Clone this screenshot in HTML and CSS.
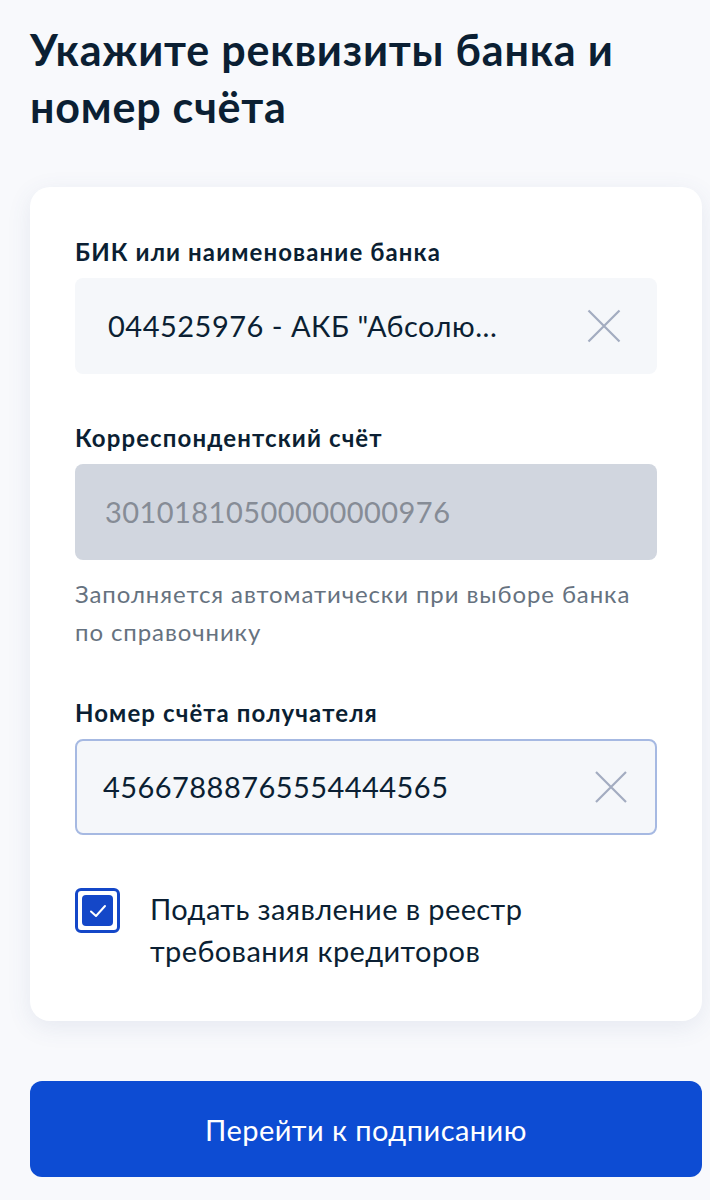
FILE: index.html
```html
<!DOCTYPE html>
<html lang="ru">
<head>
<meta charset="utf-8">
<link rel="stylesheet" href="styles.css">
</head>
<body>
<main class="page">
  <h1 class="title">Укажите реквизиты банка и номер счёта</h1>
  <section class="card">
    <div class="field f1">
      <div class="label">БИК или наименование банка</div>
      <div class="input">
        <span class="value">044525976 - АКБ "Абсолю...</span>
        <svg class="clear" width="34" height="34" viewBox="0 0 34 34"><path d="M1.5 1.5 L32.5 32.5 M32.5 1.5 L1.5 32.5" stroke="#a3acc0" stroke-width="2.2" fill="none"/></svg>
      </div>
    </div>
    <div class="field f2">
      <div class="label">Корреспондентский счёт</div>
      <div class="input disabled">
        <span class="value">30101810500000000976</span>
      </div>
      <div class="hint">Заполняется автоматически при выборе банка по справочнику</div>
    </div>
    <div class="field f3">
      <div class="label">Номер счёта получателя</div>
      <div class="input focused">
        <span class="value">45667888765554444565</span>
        <svg class="clear" width="34" height="34" viewBox="0 0 34 34"><path d="M2 2 L32 32 M32 2 L2 32" stroke="#a3acc0" stroke-width="2.2" fill="none"/></svg>
      </div>
    </div>
    <label class="check">
      <span class="box"><span class="inner"><svg width="24" height="24" viewBox="0 0 24 24"><path d="M5 12.5 L10 17 L19 7" stroke="#fff" stroke-width="2" fill="none" stroke-linecap="round" stroke-linejoin="round"/></svg></span></span>
      <span class="check-text">Подать заявление в реестр требования кредиторов</span>
    </label>
  </section>
  <button class="btn">Перейти к подписанию</button>
</main>
</body>
</html>
```

FILE: styles.css
```css
* { box-sizing: border-box; }
html, body { margin: 0; padding: 0; }
body {
  background: #f8f9fc;
  font-family: Lato, "Noto Sans", sans-serif;
  color: #0b1f33;
  width: 710px;
}
.page {
  padding: 21px 8px 24px 30px;
}
.title {
  margin: 0;
  font-size: 43px;
  font-weight: 700;
  line-height: 57px;
  letter-spacing: 0.8px;
  width: 640px;
  color: #0b1f33;
}
.card {
  margin-top: 52px;
  background: #fff;
  border-radius: 20px;
  box-shadow: 0 6px 24px rgba(70, 90, 140, 0.10);
  padding: 50px 45px 49px 45px;
  display: flex;
  flex-direction: column;
}
.field {
  display: flex;
  flex-direction: column;
}
.f1 { margin-bottom: 49px; }
.f2 { margin-bottom: 47px; }
.f3 { margin-bottom: 53px; }
.label {
  font-size: 24px;
  font-weight: 700;
  line-height: 30px;
  letter-spacing: 1.1px;
  margin-bottom: 11px;
  color: #0b1f33;
}
.input {
  height: 96px;
  border-radius: 8px;
  background: #f5f7fa;
  display: flex;
  align-items: center;
  justify-content: space-between;
  padding: 0 36px 0 33px;
}
.value {
  font-size: 29px;
  line-height: 34px;
  letter-spacing: 0.5px;
  color: #0b1f33;
}
.input.disabled {
  background: #d1d6df;
  padding-left: 30px;
}
.input.disabled .value {
  color: #868c96;
  letter-spacing: 0.45px;
}
.input.focused {
  border: 2px solid #a6b9e2;
  padding: 0 27px 0 26px;
}
.input.focused .value { letter-spacing: 0.45px; }
.hint {
  margin-top: 15px;
  font-size: 24px;
  line-height: 38px;
  letter-spacing: 0.9px;
  color: #66727f;
  width: 575px;
}
.check {
  display: flex;
  align-items: flex-start;
  gap: 30px;
}
.box {
  flex: none;
  width: 45px;
  height: 45px;
  border: 3px solid #1447c8;
  border-radius: 6px;
  background: #fff;
  display: flex;
  align-items: center;
  justify-content: center;
}
.inner {
  width: 31px;
  height: 31px;
  border-radius: 4px;
  background: #1447c8;
  display: flex;
  align-items: center;
  justify-content: center;
}
.check-text {
  font-size: 29px;
  line-height: 42px;
  letter-spacing: 0.4px;
  color: #0b1f33;
  width: 420px;
}
.btn {
  display: block;
  margin-top: 60px;
  width: 672px;
  height: 96px;
  border: none;
  border-radius: 12px;
  background: #0d4cd3;
  color: #fff;
  font-family: Lato, "Noto Sans", sans-serif;
  font-size: 29px;
  letter-spacing: 0.45px;
  font-weight: 400;
}
```
